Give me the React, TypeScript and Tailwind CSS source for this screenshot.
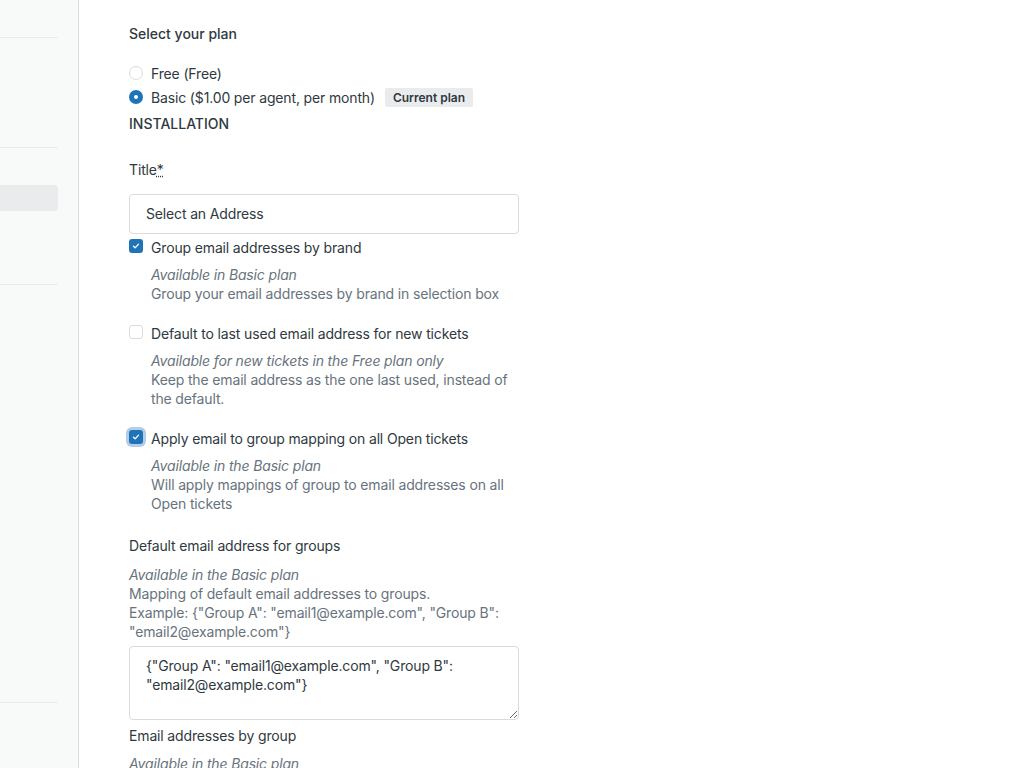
import React from "react";

const font = {
  fontFamily: 'Inter, "Noto Sans", "Liberation Sans", sans-serif',
};

function Radio({ checked }: { checked?: boolean }) {
  return checked ? (
    <span className="flex h-[14px] w-[14px] shrink-0 items-center justify-center rounded-full bg-[#1f73b7]">
      <span className="block h-[4px] w-[4px] rounded-full bg-white" />
    </span>
  ) : (
    <span className="block h-[14px] w-[14px] shrink-0 rounded-full border border-[#d8dcde] bg-white" />
  );
}

function Check({ checked, focused }: { checked?: boolean; focused?: boolean }) {
  if (!checked) {
    return (
      <span className="block h-[14px] w-[14px] shrink-0 rounded-[3px] border border-[#d8dcde] bg-white" />
    );
  }
  return (
    <span
      className={
        "flex h-[14px] w-[14px] shrink-0 items-center justify-center rounded-[3px] bg-[#1f73b7] " +
        (focused ? "shadow-[0_0_0_3px_rgba(31,115,183,0.35)]" : "")
      }
    >
      <svg width="10" height="10" viewBox="0 0 12 12" fill="none">
        <path
          d="M3 6.2l2 2 4-4.4"
          stroke="white"
          strokeWidth="1.6"
          strokeLinecap="round"
          strokeLinejoin="round"
        />
      </svg>
    </span>
  );
}

function CheckField({
  checked,
  focused,
  label,
  hint,
  desc,
  className,
}: {
  checked?: boolean;
  focused?: boolean;
  label: string;
  hint: string;
  desc: string;
  className?: string;
}) {
  return (
    <div className={className}>
      <div className="flex items-start gap-[8px]">
        <div className="pt-[0.5px]">
          <Check checked={checked} focused={focused} />
        </div>
        <span className="text-[#2f3941]">{label}</span>
      </div>
      <div className="mt-[8px] pl-[22px]">
        <div className="italic text-[#68737d]">{hint}</div>
        <div className="text-[#68737d]">{desc}</div>
      </div>
    </div>
  );
}

function Sidebar() {
  return (
    <aside className="flex h-full w-[79px] shrink-0 flex-col border-r border-[#d8dcde] bg-[#f8f9f9]">
      <div className="h-[37px]" />
      <div className="mr-[20px] h-px bg-[#e9ebed]" />
      <div className="h-[109px]" />
      <div className="mr-[20px] h-px bg-[#e9ebed]" />
      <div className="h-[37px]" />
      <div className="mr-[20px] h-[26px] rounded-r-[4px] bg-[#e9ebed]" />
      <div className="h-[73px]" />
      <div className="mr-[20px] h-px bg-[#e9ebed]" />
      <div className="h-[417px]" />
      <div className="mr-[20px] h-px bg-[#e9ebed]" />
    </aside>
  );
}

export default function App() {
  return (
    <div
      className="flex h-[768px] w-full overflow-hidden bg-white text-[14px] leading-[19px] tracking-[-0.15px] text-[#2f3941]"
      style={font}
    >
      <Sidebar />
      <main className="flex-1 pl-[50px] pt-[24px]">
        <div className="font-medium tracking-normal">Select your plan</div>

        <div className="mt-[18px] flex h-[24px] items-center gap-[8px]">
          <Radio />
          <span>Free (Free)</span>
        </div>
        <div className="flex h-[24px] items-center gap-[8px]">
          <Radio checked />
          <span>Basic ($1.00 per agent, per month)</span>
          <span className="ml-[2px] rounded-[2px] bg-[#e9ebed] px-[8px] text-[12px] font-semibold leading-[19px] tracking-normal text-[#2f3941]">
            Current plan
          </span>
        </div>

        <div className="mt-[5px] font-medium uppercase tracking-normal">Installation</div>

        <div className="mt-[27px]">
          Title
          <abbr title="required" className="underline decoration-dotted">
            *
          </abbr>
        </div>

        <div className="mt-[14.5px] flex h-[40px] w-[390px] items-center rounded-[4px] border border-[#d8dcde] bg-white px-[16px]">
          Select an Address
        </div>

        <CheckField
          className="mt-[4.5px]"
          checked
          label="Group email addresses by brand"
          hint="Available in Basic plan"
          desc="Group your email addresses by brand in selection box"
        />

        <CheckField
          className="mt-[21px] w-[390px]"
          label="Default to last used email address for new tickets"
          hint="Available for new tickets in the Free plan only"
          desc="Keep the email address as the one last used, instead of the default."
        />

        <CheckField
          className="mt-[21px] w-[390px]"
          checked
          focused
          label="Apply email to group mapping on all Open tickets"
          hint="Available in the Basic plan"
          desc="Will apply mappings of group to email addresses on all Open tickets"
        />

        <div className="mt-[23px]">Default email address for groups</div>
        <div className="mt-[10px] w-[390px] text-[#68737d]">
          <div className="italic">Available in the Basic plan</div>
          <div>Mapping of default email addresses to groups.</div>
          <div>
            Example: {'{"Group A": "email1@example.com", "Group B": "email2@example.com"}'}
          </div>
        </div>

        <textarea
          className="mt-[4.5px] block h-[74px] w-[390px] resize-y rounded-[4px] border border-[#d8dcde] bg-white px-[16px] py-[9px] text-[14px] leading-[19px] tracking-[-0.15px] text-[#2f3941] outline-none"
          style={font}
          defaultValue={'{"Group A": "email1@example.com", "Group B": "email2@example.com"}'}
        />

        <div className="mt-[6.5px]">Email addresses by group</div>
        <div className="mt-[9px] italic text-[#68737d]">Available in the Basic plan</div>
      </main>
    </div>
  );
}
